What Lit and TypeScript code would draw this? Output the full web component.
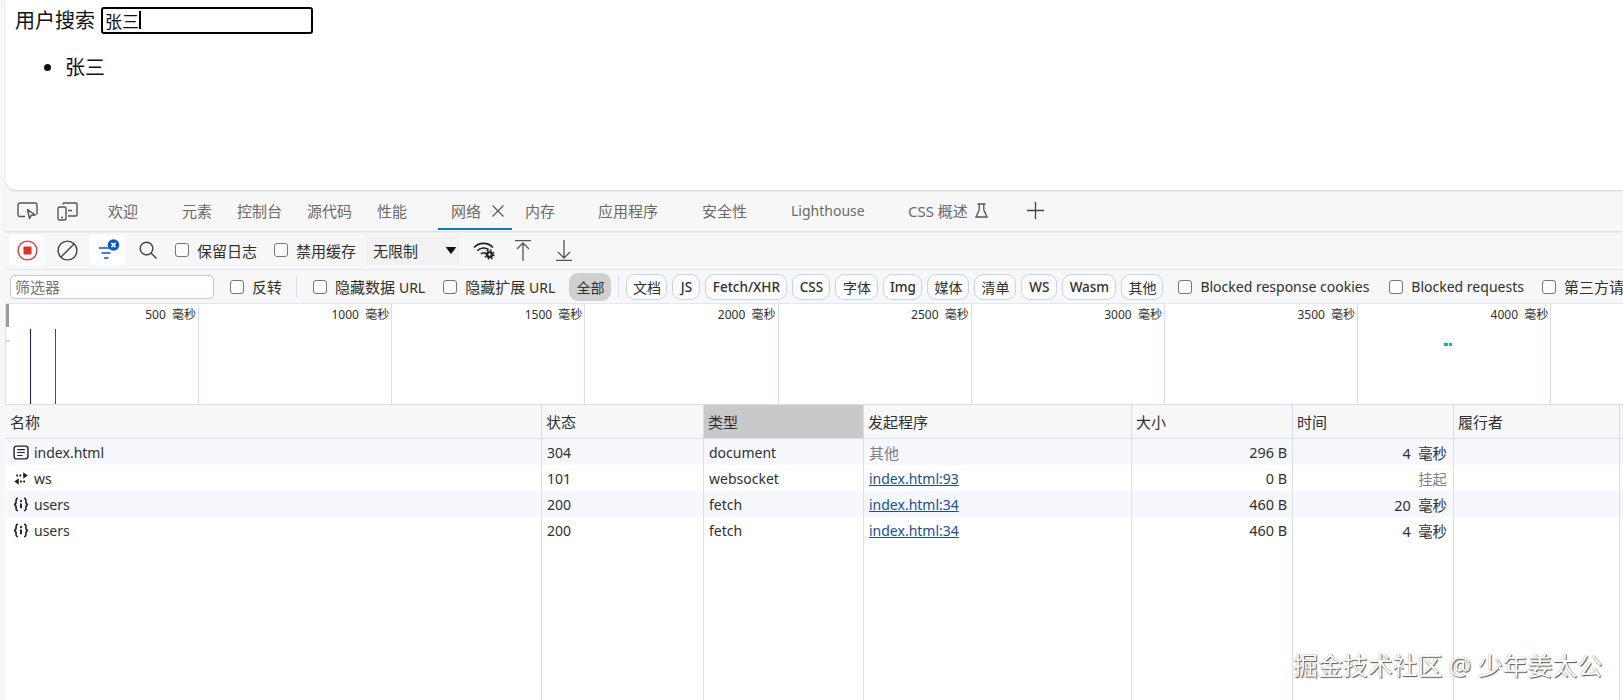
import { LitElement, html, css, svg } from "lit";
import { customElement } from "lit/decorators.js";

const tabs: { t: string; w: number; pl?: number; active?: boolean; flask?: boolean; en?: boolean }[] = [
  { t: "欢迎", w: 74 },
  { t: "元素", w: 55 },
  { t: "控制台", w: 70 },
  { t: "源代码", w: 70 },
  { t: "性能", w: 61 },
  { t: "网络", w: 74, pl: 13, active: true },
  { t: "内存", w: 86, pl: 13 },
  { t: "应用程序", w: 104 },
  { t: "安全性", w: 89 },
  { t: "Lighthouse", w: 117, en: true },
  { t: "CSS 概述", w: 119, flask: true },
];

const chips: [string, number, boolean][] = [
  ["文档", 41, false], ["JS", 28, true], ["Fetch/XHR", 82, true], ["CSS", 38, true], ["字体", 43, false], ["Img", 39, true],
  ["媒体", 42, false], ["清单", 42, false], ["WS", 36, true], ["Wasm", 54, true], ["其他", 42, false],
];

const marks = ["500", "1000", "1500", "2000", "2500", "3000", "3500", "4000", ""];

const docIcon = svg`<rect x="1" y="1" width="13" height="12" rx="2.4" fill="none" stroke="#222" stroke-width="1.3"/><path d="M4 4.3h7M4 7h7M4 9.8h5" stroke="#222" stroke-width="1.1" fill="none"/>`;
const wsIcon = svg`<path d="M3 4.2h5.6" stroke="#222" stroke-width="1.9" stroke-dasharray="1.7 1.3" fill="none"/><path d="M9.6 1.2l4.2 3-4.2 3zM5.4 6.8L1.2 9.8l4.2 3z" fill="#222"/><path d="M6.6 9.8h6" stroke="#222" stroke-width="1.9" stroke-dasharray="1.7 1.3"/>`;
const apiIcon = svg`<path d="M4.7 1.2C2.7 1.2 2.9 2.8 2.9 4.4c0 1.4-.5 2.3-1.9 2.6 1.4.3 1.9 1.2 1.9 2.6 0 1.6-.2 3.2 1.8 3.2M10.3 1.2c2 0 1.8 1.6 1.8 3.2 0 1.4.5 2.3 1.9 2.6-1.4.3-1.9 1.2-1.9 2.6 0 1.6.2 3.2-1.8 3.2" fill="none" stroke="#222" stroke-width="1.5"/><path d="M7.5 6v4.6" stroke="#222" stroke-width="1.8"/><circle cx="7.5" cy="3.8" r="1.1" fill="#222"/>`;

const rows = [
  { icon: docIcon, name: "index.html", status: "304", type: "document", init: "其他", link: false, size: "296 B", time: "4  毫秒", muted: false },
  { icon: wsIcon, name: "ws", status: "101", type: "websocket", init: "index.html:93", link: true, size: "0 B", time: "挂起", muted: true },
  { icon: apiIcon, name: "users", status: "200", type: "fetch", init: "index.html:34", link: true, size: "460 B", time: "20  毫秒", muted: false },
  { icon: apiIcon, name: "users", status: "200", type: "fetch", init: "index.html:34", link: true, size: "460 B", time: "4  毫秒", muted: false },
];

@customElement("app-root")
export class AppRoot extends LitElement {
  static styles = css`
    :host {
      display: block;
      position: relative;
      width: 100%;
      height: 700px;
      overflow: hidden;
      background: #f7f7f7;
      padding-left: 5px;
      box-sizing: border-box;
      font-family: "Noto Sans", "Noto Sans CJK SC", sans-serif;
      color: #303030;
      font-size: 15px;
    }
    svg { display: block; flex: none; }
    .en { font-size: 14px; }
    .page {
      height: 190px;
      width: 1640px;
      background: #fff;
      border-bottom-left-radius: 11px;
      box-shadow: 0 1px 2px rgba(0, 0, 0, 0.14);
      padding: 6px 0 0 10px;
      box-sizing: border-box;
      color: #111;
      font-size: 20px;
    }
    .search { display: flex; align-items: center; gap: 6px; height: 27px; }
    .fake-input {
      width: 212px;
      height: 27px;
      margin-top: 1px;
      box-sizing: border-box;
      border: 2px solid #000;
      border-radius: 3px;
      padding-left: 2px;
      font-size: 17px;
      display: flex;
      align-items: center;
    }
    .caret { width: 1.5px; height: 18px; background: #000; margin-left: 0; }
    ul { margin: 21px 0 0; padding: 0 0 0 50px; line-height: 28px; }

    .tabbar {
      height: 41px;
      display: flex;
      align-items: stretch;
      box-sizing: border-box;
      padding-left: 12px;
      box-shadow: 0 1px 2px rgba(0, 0, 0, 0.12);
      position: relative;
      font-size: 15px;
      color: #6a6a6a;
    }
    .dev { display: flex; gap: 19px; align-items: center; width: 91px; padding-top: 1px; box-sizing: border-box; }
    .tab {
      display: flex;
      align-items: center;
      gap: 11px;
      box-sizing: border-box;
      white-space: nowrap;
      padding-top: 3px;
      margin-bottom: 1px;
      border-bottom: 2px solid transparent;
      flex: none;
    }
    .tab.active { border-bottom-color: #0a7cb0; }
    .flask { margin-left: -4px; }
    .plus { align-self: center; }

    .toolbar {
      height: 39px;
      display: flex;
      align-items: center;
      box-sizing: border-box;
      padding-left: 5px;
      border-bottom: 1px solid #dfe6f6;
      font-size: 15px;
    }
    .tb { height: 30px; display: flex; align-items: center; justify-content: center; flex: none; }
    .tb.sq { width: 35px; background: #fff; border-radius: 3px; }
    .tb.wide { width: 45px; }
    .check { display: flex; align-items: center; gap: 8px; white-space: pre; flex: none; }
    .cb {
      width: 12px;
      height: 12px;
      border: 1.5px solid #777;
      border-radius: 3px;
      background: #fdfdfd;
      flex: none;
      box-sizing: content-box;
      display: block;
    }
    .toolbar .c1 { margin-left: 5px; }
    .toolbar .c2 { margin-left: 17px; }
    .throttle {
      margin-left: 10px;
      width: 93px;
      height: 30px;
      background: #f2f2f2;
      display: flex;
      align-items: center;
      justify-content: space-between;
      padding: 0 3px 0 7px;
      box-sizing: border-box;
      flex: none;
    }
    .wifi { margin-left: 14px; }
    .up { margin-left: 19px; }
    .down { margin-left: 25px; }

    .filter {
      height: 33px;
      display: flex;
      align-items: center;
      box-sizing: border-box;
      padding-left: 5px;
      white-space: nowrap;
    }
    .filter-input {
      width: 204px;
      height: 24px;
      box-sizing: border-box;
      border: 1px solid #c9c9c9;
      border-radius: 5px;
      background: #fff;
      padding-left: 4px;
      color: #777;
      line-height: 22px;
      flex: none;
    }
    .sep { width: 1px; height: 22px; background: #d5e0f4; flex: none; }
    .filter .f1 { margin-left: 16px; }
    .filter .s1 { margin-left: 14px; }
    .filter .f2 { margin-left: 16px; }
    .filter .f3 { margin-left: 18px; }
    .chip {
      height: 26px;
      flex: none;
      box-sizing: border-box;
      border: 1px solid #c5d4ee;
      border-radius: 9px;
      display: flex;
      align-items: center;
      justify-content: center;
      font-size: 14px;
      background: #fcfcfd;
    }
    .chip.latin { font-weight: 500; font-size: 13.5px; }
    .chip.all { border: none; background: #d0d0d0; width: 42px; margin-left: 14px; height: 28px; }
    .s2 { margin: 0 7px; }
    .chips { display: flex; gap: 5px; flex: none; }
    .f4 { margin-left: 15px; }
    .f5 { margin-left: 20px; }
    .f6 { margin-left: 18px; }

    .overview {
      position: relative;
      height: 102px;
      width: 1640px;
      display: grid;
      grid-template-columns: 193px repeat(8, 193.2px);
      background: #fff;
      box-sizing: border-box;
      border-left: 1px solid #d5def5;
      border-top: 1px solid #dfe6f6;
      border-bottom: 1px solid #d5def5;
      font-size: 12px;
    }
    .mark {
      border-right: 1px solid #d5def5;
      text-align: right;
      padding: 3px 2px 0 0;
      white-space: pre;
      line-height: 16px;
      box-sizing: border-box;
    }
    .bar { position: absolute; }
    .b-gray { left: 0; top: 0; width: 3px; height: 23px; background: #9a9a9a; }
    .b-blue { left: 24px; top: 25px; width: 1px; height: 75px; background: #1a1a9e; }
    .b-red { left: 49px; top: 25px; width: 1px; height: 75px; background: #a3242c; }
    .d1 { left: 1438px; top: 39px; width: 4px; height: 3px; background: #18b48c; }
    .d2 { left: 1443px; top: 39px; width: 3px; height: 3px; background: #2a9fd6; }
    .d3 { left: 0; top: 36px; width: 4px; height: 2px; background: #c4dce6; }

    .table { display: flex; flex-direction: column; height: 295px; width: 1640px; background: #fff; font-size: 14px; }
    .row { display: grid; grid-template-columns: 537px 162px 160px 268px 161px 161px 166px 1fr; height: 26px; flex: none; }
    .row.odd { background: #f6f8fd; }
    .row.head { height: 34px; background: #f7f7f7; border-bottom: 1px solid #d5def5; box-sizing: border-box; font-size: 15px; }
    .row.head .cell { padding-bottom: 1px; padding-left: 4px; }
    .row.fill { flex: 1; }
    .cell {
      border-right: 1px solid #d5def5;
      box-sizing: border-box;
      padding: 0 5px;
      display: flex;
      align-items: center;
      white-space: pre;
      overflow: hidden;
    }
    .cell.num { justify-content: flex-end; font-size: 14.4px; }
    .cell.time { padding-right: 6px; }
    .cell.last { border-right: none; }
    .cell.sorted { background: #c9c9c9; }
    .cell.name { gap: 5px; padding-left: 8px; }
    .row.head .cell.name { padding-left: 5px; }
    a { color: #1c4f8f; text-decoration: underline; }
    .muted { color: #808080; font-size: 15px; }

    .mark-tm {
      position: absolute;
      left: 1293px;
      top: 649px;
      font-size: 24.9px;
      line-height: 32px;
      color: #fff;
      white-space: nowrap;
      text-shadow: 1px 1px 1px #555, 0 0 1px #888;
    }
  `;

  render() {
    return html`
      <div class="page">
        <div class="search"><span>用户搜索</span><div class="fake-input">张三<span class="caret"></span></div></div>
        <ul><li>张三</li></ul>
      </div>

      <div class="tabbar">
        <div class="dev">
          <svg width="21" height="18" viewBox="0 0 21 18" fill="none" stroke="#555" stroke-width="1.4">
            <path d="M8 14.5H3a2 2 0 0 1-2-2V3a2 2 0 0 1 2-2h15a2 2 0 0 1 2 2v9.5"/>
            <path d="M10.5 7.5l2 9 1.8-3.2 4-.2z" stroke-linejoin="round"/>
          </svg>
          <svg width="21" height="19" viewBox="0 0 21 19" fill="none" stroke="#555" stroke-width="1.4">
            <path d="M6 2.5V2a1 1 0 0 1 1-1h12a1 1 0 0 1 1 1v11a1 1 0 0 1-1 1h-8"/>
            <rect x="1" y="5" width="8" height="13" rx="1.5"/>
            <path d="M11 8.5h4M4 15.5h2"/>
          </svg>
        </div>
        ${tabs.map(
          (t) => html`<div class="tab ${t.active ? "active" : ""}" style="width:${t.w}px;padding-left:${t.pl ?? 0}px">
            <span class=${t.en ? "en" : ""}>${t.t}</span>
            ${t.active
              ? html`<svg width="12" height="12" viewBox="0 0 12 12" stroke="#555" stroke-width="1.1"><path d="M.5.5l11 11M11.5.5l-11 11"/></svg>`
              : ""}
            ${t.flask
              ? html`<svg class="flask" width="13" height="15" viewBox="0 0 13 15" fill="none" stroke="#555" stroke-width="1.3"><path d="M2.5 1h8M4.2 1v6L1 14h11L8.8 7V1"/></svg>`
              : ""}
          </div>`
        )}
        <svg class="plus" width="17" height="17" viewBox="0 0 17 17" stroke="#444" stroke-width="1.3"><path d="M8.5 0v17M0 8.5h17"/></svg>
      </div>

      <div class="toolbar">
        <div class="tb sq">
          <svg width="21" height="21" viewBox="0 0 21 21"><circle cx="10.5" cy="10.5" r="9.4" fill="none" stroke="#d8434a" stroke-width="1.4"/><rect x="6.5" y="6.5" width="8" height="8" rx="0.8" fill="#d9342b"/></svg>
        </div>
        <div class="tb wide">
          <svg width="21" height="21" viewBox="0 0 21 21" fill="none" stroke="#444" stroke-width="1.4"><circle cx="10.5" cy="10.5" r="9.4"/><path d="M4 17L17 4"/></svg>
        </div>
        <div class="tb sq">
          <svg width="24" height="22" viewBox="0 0 24 22">
            <path d="M3 9h14M5.5 14h9M8 19h4.5" stroke="#0b57d0" stroke-width="1.5" fill="none"/>
            <circle cx="17.5" cy="6" r="5.8" fill="#0b57d0"/>
            <path d="M15.4 3.9l4.2 4.2M19.6 3.9l-4.2 4.2" stroke="#fff" stroke-width="1.5"/>
          </svg>
        </div>
        <div class="tb wide">
          <svg width="18" height="18" viewBox="0 0 18 18" fill="none" stroke="#444" stroke-width="1.4"><circle cx="7.5" cy="7.5" r="6.3"/><path d="M12 12l5.5 5.5"/></svg>
        </div>
        <label class="check c1"><span class="cb"></span>保留日志</label>
        <label class="check c2"><span class="cb"></span>禁用缓存</label>
        <div class="throttle">
          <span>无限制</span>
          <svg width="10" height="7" viewBox="0 0 10 7"><path d="M.5.5h9L5 6.5z" fill="#111" stroke="#111" stroke-linejoin="round"/></svg>
        </div>
        <svg class="wifi" width="23" height="20" viewBox="0 0 23 20" fill="none" stroke="#222" stroke-width="1.6">
          <path d="M1 7.5a13 13 0 0 1 19 0M4.3 10.8a8.6 8.6 0 0 1 11.5-1.2M7.8 14a4.2 4.2 0 0 1 4.4-1"/>
          <circle cx="16.5" cy="14.5" r="3.6" fill="#222" stroke="none"/>
          <circle cx="16.5" cy="14.5" r="4.4" stroke="#222" stroke-width="1.6" stroke-dasharray="1.7 1.75"/>
          <circle cx="16.5" cy="14.5" r="1.2" fill="#f7f7f7" stroke="none"/>
        </svg>
        <svg class="up" width="16" height="21" viewBox="0 0 16 21" fill="none" stroke="#555" stroke-width="1.3"><path d="M0 .7h16M8 3v18M2 9l6-6 6 6"/></svg>
        <svg class="down" width="16" height="21" viewBox="0 0 16 21" fill="none" stroke="#555" stroke-width="1.3"><path d="M0 20.3h16M8 0v18M2 12l6 6 6-6"/></svg>
      </div>

      <div class="filter">
        <div class="filter-input">筛选器</div>
        <label class="check f1"><span class="cb"></span>反转</label>
        <span class="sep s1"></span>
        <label class="check f2"><span class="cb"></span><span>隐藏数据 <span class="en">URL</span></span></label>
        <label class="check f3"><span class="cb"></span><span>隐藏扩展 <span class="en">URL</span></span></label>
        <div class="chip all">全部</div>
        <span class="sep s2"></span>
        <div class="chips">
          ${chips.map(([t, w, latin]) => html`<div class="chip ${latin ? "latin" : ""}" style="width:${w}px">${t}</div>`)}
        </div>
        <label class="check f4"><span class="cb"></span><span class="en">Blocked response cookies</span></label>
        <label class="check f5"><span class="cb"></span><span class="en">Blocked requests</span></label>
        <label class="check f6"><span class="cb"></span>第三方请求</label>
      </div>

      <div class="overview">
        ${marks.map((m) => html`<div class="mark">${m ? `${m}  毫秒` : ""}</div>`)}
        <span class="bar b-gray"></span>
        <span class="bar d3"></span>
        <span class="bar b-blue"></span>
        <span class="bar b-red"></span>
        <span class="bar d1"></span>
        <span class="bar d2"></span>
      </div>

      <div class="table">
        <div class="row head">
          <div class="cell name">名称</div>
          <div class="cell">状态</div>
          <div class="cell sorted">类型</div>
          <div class="cell">发起程序</div>
          <div class="cell">大小</div>
          <div class="cell">时间</div>
          <div class="cell">履行者</div>
          <div class="cell last">瀑布</div>
        </div>
        ${rows.map(
          (r, i) => html`<div class="row ${i % 2 === 0 ? "odd" : ""}">
            <div class="cell name"><svg width="16" height="15" viewBox="0 0 15 14">${r.icon}</svg>${r.name}</div>
            <div class="cell">${r.status}</div>
            <div class="cell">${r.type}</div>
            <div class="cell">${r.link ? html`<a>${r.init}</a>` : html`<span class="muted">${r.init}</span>`}</div>
            <div class="cell num">${r.size}</div>
            <div class="cell num time ${r.muted ? "muted" : ""}">${r.time}</div>
            <div class="cell"></div>
            <div class="cell last"></div>
          </div>`
        )}
        <div class="row fill">
          <div class="cell"></div><div class="cell"></div><div class="cell"></div><div class="cell"></div>
          <div class="cell"></div><div class="cell"></div><div class="cell"></div><div class="cell last"></div>
        </div>
      </div>

      <div class="mark-tm">掘金技术社区 @ 少年姜太公</div>
    `;
  }
}
